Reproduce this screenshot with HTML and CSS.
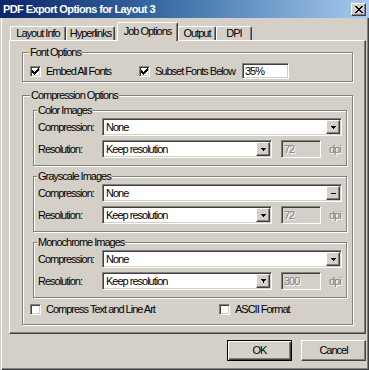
FILE: index.html
```html
<!DOCTYPE html>
<html>
<head>
<meta charset="utf-8">
<link rel="stylesheet" href="styles.css">
</head>
<body>
<div class="window">
  <div class="titlebar">
    <span class="title">PDF Export Options for Layout 3</span>
    <div class="close raised">
      <svg width="8" height="7" viewBox="0 0 8 7" shape-rendering="crispEdges"><path d="M0 0h2v1H0zM6 0h2v1H6zM1 1h2v1H1zM5 1h2v1H5zM2 2h4v1H2zM3 3h2v1H3zM2 4h4v1H2zM1 5h2v1H1zM5 5h2v1H5zM0 6h2v1H0zM6 6h2v1H6z"/></svg>
    </div>
  </div>
  <div class="frame">
    <div class="tabs">
      <div class="tab tab-layout">Layout Info</div>
      <div class="tab tab-hyper">Hyperlinks</div>
      <div class="tab tab-job active">Job Options</div>
      <div class="tab tab-output">Output</div>
      <div class="tab tab-dpi">DPI</div>
    </div>
    <div class="panel">
      <fieldset class="group group-font">
        <legend>Font Options</legend>
        <div class="font-row">
          <div class="check opt-embed"><span class="box"><svg width="7" height="7" viewBox="0 0 7 7" shape-rendering="crispEdges"><path d="M6 0h1v1H6zM5 1h2v1H5zM0 2h1v1H0zM4 2h3v1H4zM0 3h2v1H0zM3 3h3v1H3zM0 4h5v1H0zM1 5h3v1H1zM2 6h1v1H2z"/></svg></span><span>Embed All Fonts</span></div>
          <div class="check opt-subset"><span class="box"><svg width="7" height="7" viewBox="0 0 7 7" shape-rendering="crispEdges"><path d="M6 0h1v1H6zM5 1h2v1H5zM0 2h1v1H0zM4 2h3v1H4zM0 3h2v1H0zM3 3h3v1H3zM0 4h5v1H0zM1 5h3v1H1zM2 6h1v1H2z"/></svg></span><span>Subset Fonts Below</span></div>
          <div class="textbox">35%</div>
        </div>
      </fieldset>
      <fieldset class="group group-comp">
        <legend>Compression Options</legend>
        <fieldset class="group sub">
          <legend>Color Images</legend>
          <div class="row">
            <span class="lbl">Compression:</span>
            <div class="combo combo-wide"><span class="combo-text">None</span><span class="drop raised"><svg width="5" height="3" viewBox="0 0 5 3" shape-rendering="crispEdges"><path d="M0 0h5v1H0zM1 1h3v1H1zM2 2h1v1H2z"/></svg></span></div>
          </div>
          <div class="row">
            <span class="lbl">Resolution:</span>
            <div class="combo combo-res"><span class="combo-text">Keep resolution</span><span class="drop raised"><svg width="5" height="3" viewBox="0 0 5 3" shape-rendering="crispEdges"><path d="M0 0h5v1H0zM1 1h3v1H1zM2 2h1v1H2z"/></svg></span></div>
            <div class="field">72</div>
            <span class="unit">dpi</span>
          </div>
        </fieldset>
        <fieldset class="group sub">
          <legend>Grayscale Images</legend>
          <div class="row">
            <span class="lbl">Compression:</span>
            <div class="combo combo-wide"><span class="combo-text">None</span><span class="drop raised"><svg width="5" height="3" viewBox="0 0 5 3" shape-rendering="crispEdges"><path d="M0 1h5v1H0z"/></svg></span></div>
          </div>
          <div class="row">
            <span class="lbl">Resolution:</span>
            <div class="combo combo-res"><span class="combo-text">Keep resolution</span><span class="drop raised"><svg width="5" height="3" viewBox="0 0 5 3" shape-rendering="crispEdges"><path d="M0 0h5v1H0zM1 1h3v1H1zM2 2h1v1H2z"/></svg></span></div>
            <div class="field">72</div>
            <span class="unit">dpi</span>
          </div>
        </fieldset>
        <fieldset class="group sub">
          <legend>Monochrome Images</legend>
          <div class="row">
            <span class="lbl">Compression:</span>
            <div class="combo combo-wide"><span class="combo-text">None</span><span class="drop raised"><svg width="5" height="3" viewBox="0 0 5 3" shape-rendering="crispEdges"><path d="M0 0h5v1H0zM1 1h3v1H1zM2 2h1v1H2z"/></svg></span></div>
          </div>
          <div class="row">
            <span class="lbl">Resolution:</span>
            <div class="combo combo-res"><span class="combo-text">Keep resolution</span><span class="drop raised"><svg width="5" height="4" viewBox="0 0 5 4" shape-rendering="crispEdges"><path d="M0 0h5v1H0zM1 1h3v1H1zM2 2h1v2H2z"/></svg></span></div>
            <div class="field">300</div>
            <span class="unit">dpi</span>
          </div>
        </fieldset>
        <div class="check-row">
          <div class="check opt-compress"><span class="box"></span><span>Compress Text and Line Art</span></div>
          <div class="check"><span class="box"></span><span>ASCII Format</span></div>
        </div>
      </fieldset>
    </div>
    <div class="buttons">
      <div class="btn btn-default">OK</div>
      <div class="btn">Cancel</div>
    </div>
  </div>
</div>
</body>
</html>
```

FILE: styles.css
```css
* { box-sizing: border-box; }
html, body { margin: 0; padding: 0; }
body {
  width: 369px;
  height: 370px;
  overflow: hidden;
  background: #d4d0c8;
  font-family: "Liberation Sans", Arial, sans-serif;
  font-size: 11px;
  line-height: 13px;
  letter-spacing: -1px;
  color: #000;
}
.window {
  width: 369px;
  height: 370px;
  display: flex;
  flex-direction: column;
}
.titlebar {
  height: 18px;
  flex: none;
  display: flex;
  align-items: center;
  justify-content: space-between;
  padding: 0 3px 0 3px;
  background: linear-gradient(to right, #0a246a 0%, #3a6ea5 45%, #a6caf0 100%);
}
.title {
  color: #fff;
  font-weight: bold;
  letter-spacing: -0.6px;
}
.raised {
  background: #d4d0c8;
  border: 1px solid;
  border-color: #fff #404040 #404040 #fff;
  box-shadow: inset -1px -1px 0 #808080;
}
.close {
  width: 15px;
  height: 13px;
  display: flex;
  align-items: center;
  justify-content: center;
}
.frame {
  flex: 1;
  padding: 0 3px 0 9px;
  box-shadow: inset 1px 0 0 #d4d0c8, inset 2px 0 0 #fff, inset -1px -1px 0 #404040, inset -2px -2px 0 #808080;
}
.tabs {
  height: 22px;
  display: flex;
  align-items: flex-end;
  padding-left: 1px;
}
.tab {
  height: 14px;
  border-top: 1px solid #fff;
  border-left: 1px solid #fff;
  border-right: 1px solid #404040;
  border-radius: 2px 2px 0 0;
  box-shadow: inset -1px 0 0 #808080;
  text-align: center;
  line-height: 13px;
  flex: none;
}
.tab-layout { width: 56px; }
.tab-hyper { width: 49px; }
.tab-job { width: 61px; margin-left: 2px; }
.tab-output { width: 38px; }
.tab-dpi { width: 36px; }
.tab.active {
  height: 19px;
  margin-bottom: -1px;
  padding-top: 2px;
  background: #d4d0c8;
  position: relative;
  z-index: 1;
}
.panel {
  height: 294px;
  border: 1px solid;
  border-color: #fff #404040 #404040 #fff;
  box-shadow: inset -1px -1px 0 #808080;
  padding: 0 12px 0 12px;
}
.group {
  margin: 0;
  padding: 0;
  min-width: 0;
  border: 1px solid #808080;
  box-shadow: inset 1px 1px 0 #fff, 1px 1px 0 #fff;
}
.group > legend {
  padding: 0 1px;
  margin-left: -1px;
  line-height: 13px;
  background: #d4d0c8;
}
.group-font {
  margin-top: 5px;
  padding: 4px 7px 2px 7px;
}
.group-comp {
  margin-top: 7px;
  padding: 2px 5px 8px 10px;
}
.group-comp > legend { margin-left: -3px; }
.sub { padding: 1px 4px 7px 4px; }
.sub + .sub { margin-top: 4px; }
.font-row {
  display: flex;
  align-items: center;
  height: 16px;
}
.check {
  display: flex;
  align-items: center;
  gap: 5px;
  flex: none;
}
.opt-embed { width: 109px; }
.opt-subset { width: 103px; }
.opt-compress { width: 189px; }
.box {
  width: 11px;
  height: 11px;
  flex: none;
  background: #fff;
  border: 1px solid;
  border-color: #808080 #fff #fff #808080;
  box-shadow: inset 1px 1px 0 #404040, inset -1px -1px 0 #d4d0c8;
  display: flex;
  align-items: center;
  justify-content: center;
}
.sunken {
  border: 1px solid;
}
.textbox {
  width: 47px;
  height: 16px;
  background: #fff;
  border: 1px solid;
  border-color: #808080 #fff #fff #808080;
  box-shadow: inset 1px 1px 0 #404040, inset -1px -1px 0 #d4d0c8;
  padding-left: 2px;
  line-height: 14px;
}
.row {
  display: flex;
  align-items: center;
  height: 18px;
}
.row + .row { margin-top: 4px; }
.lbl { width: 64px; flex: none; }
.combo {
  height: 18px;
  display: flex;
  align-items: center;
  background: #fff;
  border: 1px solid;
  border-color: #808080 #fff #fff #808080;
  box-shadow: inset 1px 1px 0 #404040, inset -1px -1px 0 #d4d0c8;
  padding: 1px;
}
.combo-wide { flex: 1; }
.combo-res { width: 170px; flex: none; }
.combo-text { flex: 1; padding-left: 2px; line-height: 14px; }
.drop {
  width: 14px;
  height: 14px;
  flex: none;
  display: flex;
  align-items: center;
  justify-content: center;
}
.field {
  width: 40px;
  height: 18px;
  flex: none;
  margin-left: 9px;
  background: #d4d0c8;
  border: 1px solid;
  border-color: #808080 #fff #fff #808080;
  box-shadow: inset 1px 1px 0 #404040, inset -1px -1px 0 #d4d0c8;
  padding-left: 2px;
  line-height: 16px;
  color: #808080;
  text-shadow: 1px 1px 0 #fff;
}
.unit {
  margin-left: 8px;
  color: #808080;
  text-shadow: 1px 1px 0 #fff;
}
.check-row {
  display: flex;
  align-items: center;
  height: 13px;
  margin-top: 5px;
  margin-left: -3px;
}
.buttons {
  display: flex;
  justify-content: flex-end;
  gap: 9px;
  margin-top: 6px;
}
.btn {
  width: 65px;
  height: 21px;
  background: #d4d0c8;
  border: 1px solid;
  border-color: #fff #404040 #404040 #fff;
  box-shadow: inset -1px -1px 0 #808080;
  display: flex;
  align-items: center;
  justify-content: center;
}
.btn-default {
  border-color: #000;
  box-shadow: inset 1px 1px 0 #fff, inset -1px -1px 0 #404040, inset -2px -2px 0 #808080;
}
```
